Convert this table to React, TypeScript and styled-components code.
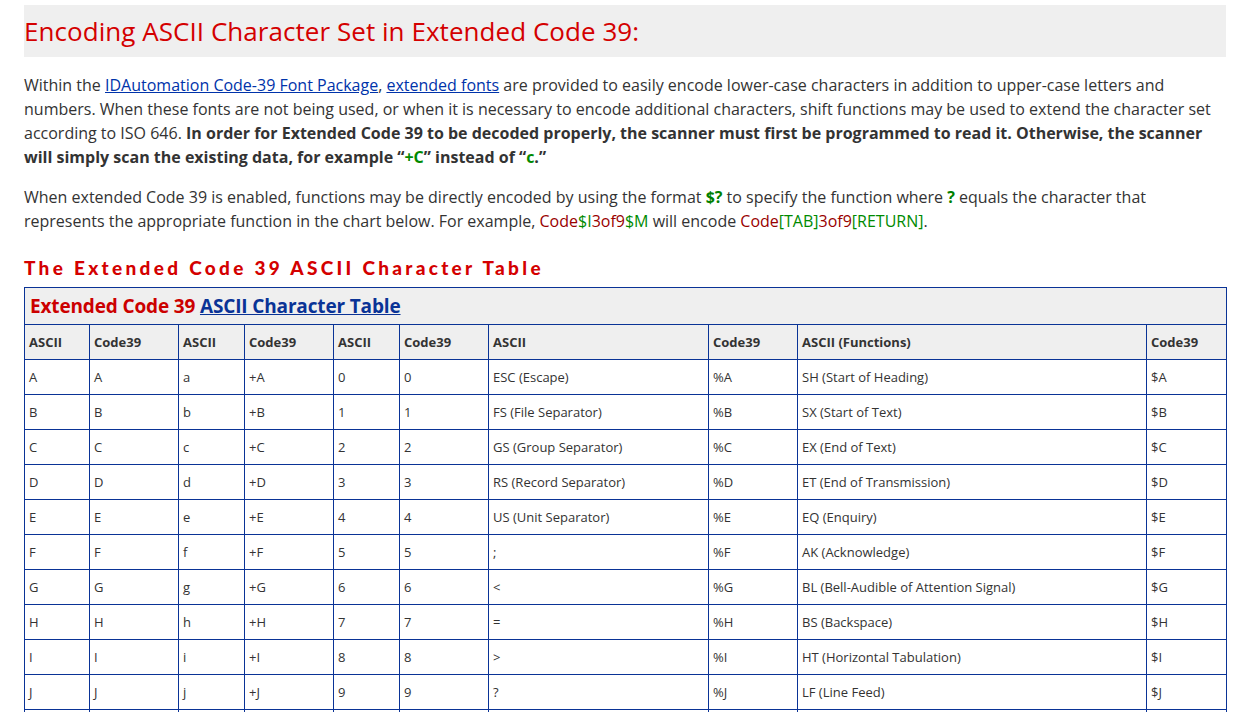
import React from "react";
import styled, { createGlobalStyle } from "styled-components";

const Global = createGlobalStyle`
  body { margin: 0; background: #fff; font-family: "Open Sans", "Noto Sans", sans-serif; color: #333; }
`;

const Page = styled.div`
  width: 1202px;
  padding: 5px 0 0 24px;
`;

const TitleBox = styled.div`
  background: #efefef;
  height: 52px;
  display: flex;
  align-items: center;
  padding-left: 0;
`;

const Title = styled.h1`
  margin: 0;
  font-family: "Open Sans", sans-serif;
  font-weight: 400;
  font-size: 26px;
  color: #d40000;
  letter-spacing: 0.05px;
`;

const Para = styled.p`
  margin: 16px 0 0;
  font-size: 16px;
  line-height: 24px;
  color: #333;
  letter-spacing: 0;
`;

const Link = styled.a`
  color: #0033aa;
  text-decoration: underline;
`;

const Strong = styled.b`
  font-weight: 700;
  color: #333;
`;

const Hue = styled.span<{ $c: "green" | "red" }>`
  color: ${(p) => (p.$c === "green" ? "#008a00" : "#990000")};
`;

const GreenBold = styled.b`
  color: #008000;
  font-weight: 700;
`;

const SubHead = styled.h3`
  margin: 23px 0 7px;
  font-family: Lato, sans-serif;
  font-weight: 900;
  font-size: 19px;
  line-height: 24px;
  letter-spacing: 3.3px;
  color: #d40000;
`;

const Table = styled.table`
  border-collapse: collapse;
  width: 1202px;
  table-layout: fixed;
  font-size: 13px;
  color: #333;
`;

const CaptionCell = styled.th`
  background: #efefef;
  border: 1px solid #0a3396;
  height: 36px;
  text-align: left;
  padding: 0 0 0 5px;
  font-size: 19px;
  font-weight: 700;
  color: #cc0000;
  letter-spacing: -0.15px;
`;

const CaptionLink = styled.a`
  color: #0a3396;
  text-decoration: underline;
`;

const Head = styled.th`
  background: #efefef;
  border: 1px solid #0a3396;
  height: 34px;
  text-align: left;
  padding: 0 0 0 4px;
  font-weight: 700;
  font-size: 13px;
`;

const Cell = styled.td`
  border: 1px solid #0a3396;
  height: 34px;
  padding: 0 0 0 4px;
  font-size: 13px;
`;

const widths = [65, 89, 66, 89, 66, 89, 220, 89, 349, 80];
const heads = ["ASCII", "Code39", "ASCII", "Code39", "ASCII", "Code39", "ASCII", "Code39", "ASCII (Functions)", "Code39"];

const letters = "ABCDEFGHIJKLMNOPQRSTUVWXYZ".split("");
const col7 = ["ESC (Escape)", "FS (File Separator)", "GS (Group Separator)", "RS (Record Separator)", "US (Unit Separator)", ";", "<", "=", ">", "?", "[", "\\", "]", "^", "_", "{", "|", "}", "~", "DEL", "NUL", "@", "`", "DEL", "DEL", "DEL"];
const col9 = ["SH (Start of Heading)", "SX (Start of Text)", "EX (End of Text)", "ET (End of Transmission)", "EQ (Enquiry)", "AK (Acknowledge)", "BL (Bell-Audible of Attention Signal)", "BS (Backspace)", "HT (Horizontal Tabulation)", "LF (Line Feed)", "VT (Vertical Tabulation)", "FF (Form Feed)", "CR (Carriage Return)", "SO (Shift Out)", "SI (Shift In)", "DL (Data Link Escape)", "D1 (Device Control 1)", "D2 (Device Control 2)", "D3 (Device Control 3)", "D4 (Device Control 4)", "NK (Negative Acknowledge)", "SY (Synchronous Idle)", "EB (End of Transmission Block)", "CN (Cancel)", "EM (End of Medium)", "SB (Substitute)"];

const rows = letters.map((L, i) => [
  L,
  L,
  L.toLowerCase(),
  "+" + L,
  i < 10 ? String(i) : "",
  i < 10 ? String(i) : "",
  col7[i],
  "%" + L,
  col9[i],
  "$" + L,
]);

export default function App() {
  return (
    <>
      <Global />
      <Page>
        <TitleBox>
          <Title>Encoding ASCII Character Set in Extended Code 39:</Title>
        </TitleBox>
        <Para>
          Within the <Link href="#">IDAutomation Code-39 Font Package</Link>, <Link href="#">extended fonts</Link> are
          provided to easily encode lower-case characters in addition to upper-case letters and numbers. When these fonts
          are not being used, or when it is necessary to encode additional characters, shift functions may be used to
          extend the character set according to ISO 646.{" "}
          <Strong>
            In order for Extended Code 39 to be decoded properly, the scanner must first be programmed to read it.
            Otherwise, the scanner will simply scan the existing data, for example “<Hue $c="green">+C</Hue>” instead of
            “<Hue $c="green">c</Hue>.”
          </Strong>
        </Para>
        <Para>
          When extended Code 39 is enabled, functions may be directly encoded by using the format <GreenBold>$?</GreenBold>{" "}
          to specify the function where <GreenBold>?</GreenBold> equals the character that represents the appropriate
          function in the chart below. For example, <Hue $c="red">Code</Hue>
          <Hue $c="green">$I</Hue>
          <Hue $c="red">3of9</Hue>
          <Hue $c="green">$M</Hue> will encode <Hue $c="red">Code</Hue>
          <Hue $c="green">[TAB]</Hue>
          <Hue $c="red">3of9</Hue>
          <Hue $c="green">[RETURN]</Hue>.
        </Para>
        <SubHead>The Extended Code 39 ASCII Character Table</SubHead>
        <Table>
          <colgroup>
            {widths.map((w, i) => (
              <col key={i} style={{ width: w }} />
            ))}
          </colgroup>
          <thead>
            <tr>
              <CaptionCell colSpan={10}>
                Extended Code 39 <CaptionLink href="#">ASCII Character Table</CaptionLink>
              </CaptionCell>
            </tr>
            <tr>
              {heads.map((h, i) => (
                <Head key={i}>{h}</Head>
              ))}
            </tr>
          </thead>
          <tbody>
            {rows.map((r, i) => (
              <tr key={i}>
                {r.map((c, j) => (
                  <Cell key={j}>{c}</Cell>
                ))}
              </tr>
            ))}
          </tbody>
        </Table>
      </Page>
    </>
  );
}
